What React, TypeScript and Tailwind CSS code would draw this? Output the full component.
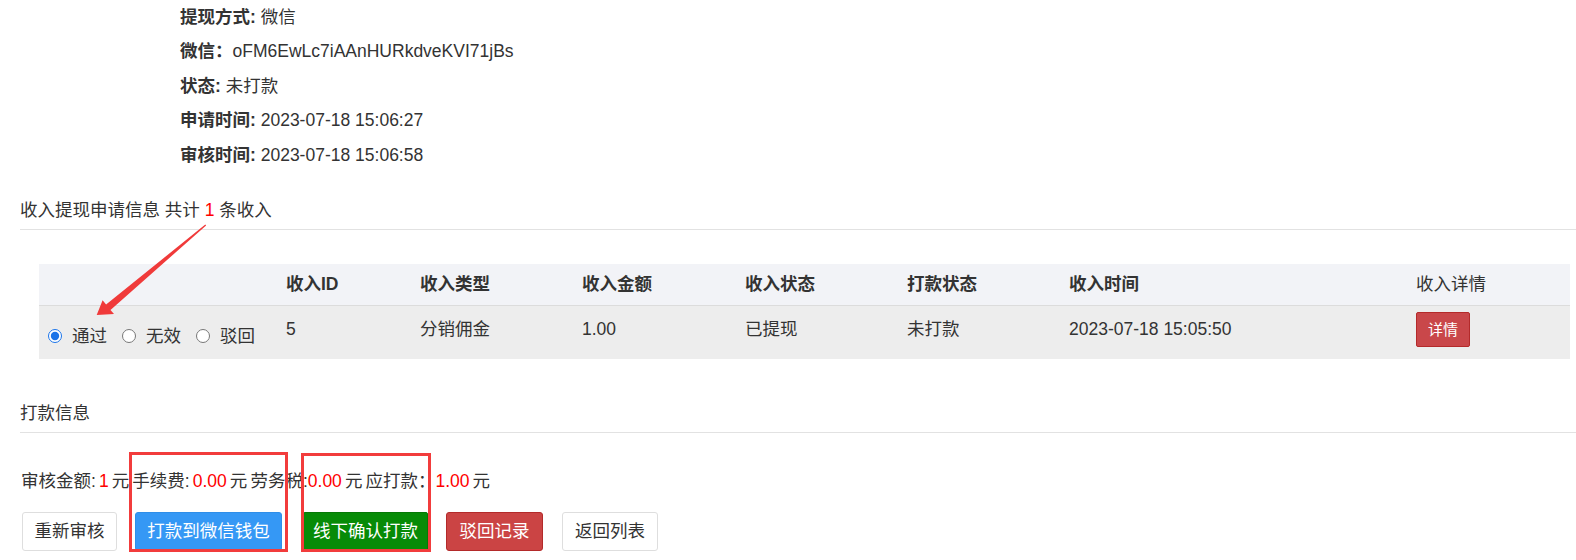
import React from "react";

const FONT = "font-['Liberation_Sans','Noto_Sans_CJK_SC',sans-serif]";

function InfoRow({ label, value }: { label: string; value: string }) {
  return (
    <div className="h-[25px] leading-[25px] mb-[9.5px] whitespace-nowrap">
      <b className="font-bold">{label}</b>
      <span>{value}</span>
    </div>
  );
}

function Radio({ label, checked }: { label: string; checked?: boolean }) {
  return (
    <label className="flex items-center">
      <input
        type="radio"
        name="status"
        defaultChecked={checked}
        className="m-0 w-[14px] h-[14px] accent-[#1a73e8]"
      />
      <span className="ml-[10px]">{label}</span>
    </label>
  );
}

export default function App() {
  const cols = "grid grid-cols-[237px_134px_162px_163px_162px_162px_347px_1fr] items-center";
  return (
    <div className={`relative w-[1576px] h-[560px] overflow-hidden bg-white text-[#333] text-[17.5px] ${FONT}`}>
      {/* top info */}
      <div className="pl-[180px] pt-[4.5px]">
        <InfoRow label="提现方式:" value=" 微信" />
        <InfoRow label="微信：" value="oFM6EwLc7iAAnHURkdveKVI71jBs" />
        <InfoRow label="状态:" value=" 未打款" />
        <InfoRow label="申请时间:" value=" 2023-07-18 15:06:27" />
        <InfoRow label="审核时间:" value=" 2023-07-18 15:06:58" />
      </div>

      {/* section 1 */}
      <div className="ml-[20px] mt-[30px]">
        <div className="leading-[25px] pb-[6px] border-b border-[#e2e2e2]">
          收入提现申请信息 共计 <span className="text-[#ff0000]">1</span> 条收入
        </div>
      </div>

      <div className="ml-[39px] mr-[6px] mt-[34px]">
        <div className={`${cols} h-[42px] bg-[#f2f3f7] border-b border-[#dcdcdc] font-bold`}>
          <div className="px-[10px]"></div>
          <div className="px-[10px]">收入ID</div>
          <div className="px-[10px]">收入类型</div>
          <div className="px-[10px]">收入金额</div>
          <div className="px-[10px]">收入状态</div>
          <div className="px-[10px]">打款状态</div>
          <div className="px-[10px]">收入时间</div>
          <div className="px-[10px] font-normal">收入详情</div>
        </div>
        <div className={`${cols} h-[53px] bg-[#ededed]`}>
          <div className="pl-[9px] flex items-center gap-[15px] pt-[14px]">
            <Radio label="通过" checked />
            <Radio label="无效" />
            <Radio label="驳回" />
          </div>
          <div className="px-[10px]">5</div>
          <div className="px-[10px]">分销佣金</div>
          <div className="px-[10px]">1.00</div>
          <div className="px-[10px]">已提现</div>
          <div className="px-[10px]">未打款</div>
          <div className="px-[10px]">2023-07-18 15:05:50</div>
          <div className="px-[10px] pt-[2px]">
            <button className="w-[54px] h-[35px] rounded-[2px] bg-[#c9474a] border border-[#b42a2a] text-white text-[15px]">
              详情
            </button>
          </div>
          <div></div>
        </div>
      </div>

      {/* section 2 */}
      <div className="ml-[20px] mt-[42px]">
        <div className="leading-[25px] pb-[6px] border-b border-[#e2e2e2]">打款信息</div>
      </div>

      <div className="ml-[21px] mt-[36.5px] leading-[25px] whitespace-pre [word-spacing:-1.8px]">
        审核金额: <span className="text-[#ff0000]">1</span> 元 手续费: <span className="text-[#ff0000]">0.00</span> 元 劳务税:<span className="text-[#ff0000]">0.00</span> 元 应打款：<span className="text-[#ff0000]">1.00</span> 元
      </div>

      <div className="ml-[22px] mt-[17.5px] flex items-start">
        <button className="w-[95px] h-[39px] rounded-[3px] bg-white border border-[#dedede] text-[17.5px] text-[#333]">
          重新审核
        </button>
        <button className="ml-[18px] w-[147px] h-[39px] rounded-[3px] bg-[#3598f5] border border-[#2f8ee8] text-[17.5px] text-white">
          打款到微信钱包
        </button>
        <button className="ml-[21px] w-[125px] h-[39px] rounded-[2px] bg-[#078b07] border border-[#067806] text-[17.5px] text-white">
          线下确认打款
        </button>
        <button className="ml-[18px] w-[97px] h-[39px] rounded-[3px] bg-[#cb4444] border border-[#b32a2a] text-[17.5px] text-white">
          驳回记录
        </button>
        <button className="ml-[19px] w-[96px] h-[39px] rounded-[3px] bg-white border border-[#dedede] text-[17.5px] text-[#333]">
          返回列表
        </button>
      </div>

      {/* annotation overlays */}
      <div className="absolute left-[129px] top-[452px] w-[159px] h-[100px] border-[3px] border-[#f23c3c] pointer-events-none" />
      <div className="absolute left-[301px] top-[453px] w-[130px] h-[99px] border-[3px] border-[#f23c3c] pointer-events-none" />
      <svg className="absolute left-0 top-0 pointer-events-none" width="1576" height="560">
        <polygon
          points="206.1,225.5 110.5,309.9 114,314.1 96.7,315 102.6,300.3 106.1,304.5 205.3,224.5"
          fill="#f03a3a"
        />
      </svg>
    </div>
  );
}
